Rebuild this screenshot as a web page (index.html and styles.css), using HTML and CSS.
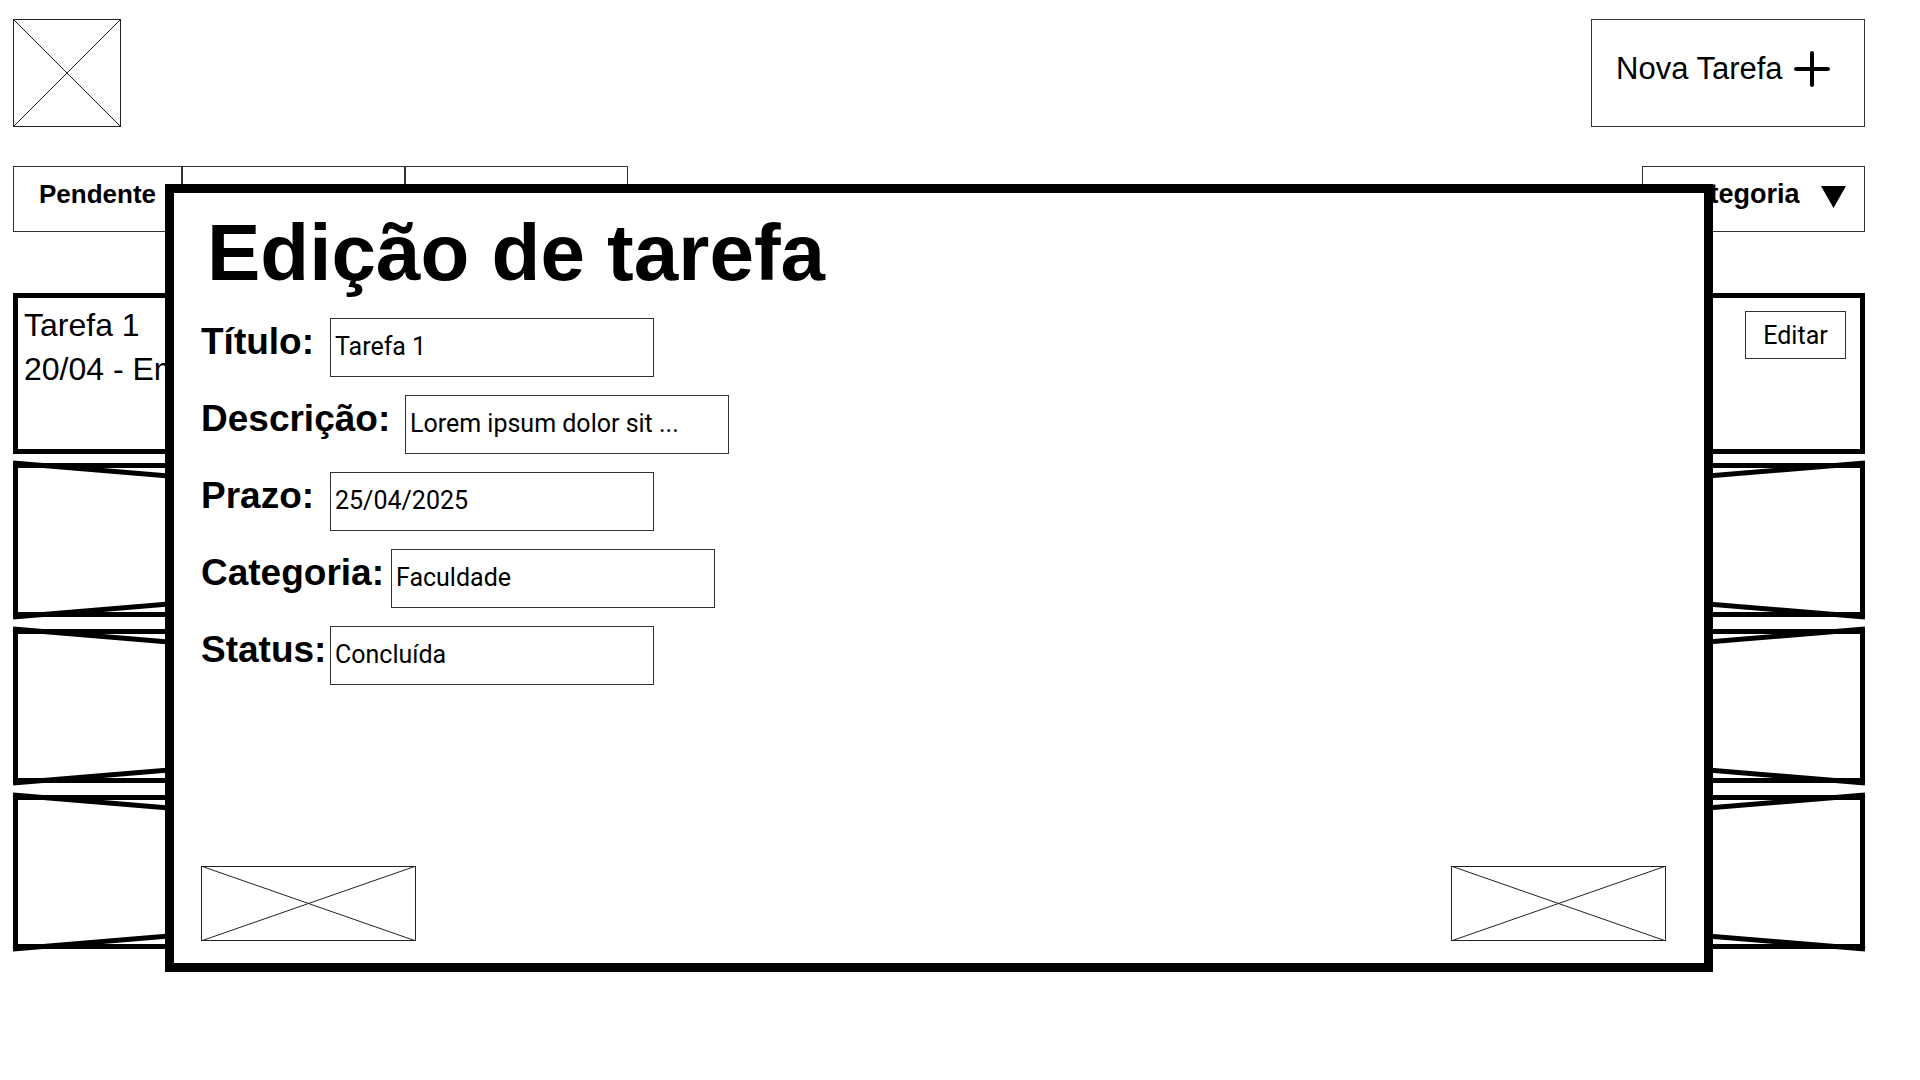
FILE: index.html
```html
<!DOCTYPE html>
<html lang="pt-BR">
<head>
<meta charset="utf-8">
<meta name="viewport" content="width=device-width, initial-scale=1">
<title>Edição de tarefa</title>
<link rel="stylesheet" href="styles.css">
</head>
<body>
<div class="page">
  <header class="topbar">
    <svg class="logo crossed" role="img" aria-label="Logo">
      <rect width="100%" height="100%"/>
      <line x1="0" y1="0" x2="100%" y2="100%"/>
      <line x1="0" y1="100%" x2="100%" y2="0"/>
    </svg>
    <button class="new-task" type="button">
      <span>Nova Tarefa</span>
      <svg class="plus" viewBox="0 0 36 36" aria-hidden="true"><path d="M18 2v32M2 18h32"/></svg>
    </button>
  </header>

  <nav class="filters">
    <div class="tabs">
      <button class="tab tab-first" type="button">Pendente</button>
      <button class="tab" type="button">Em progresso</button>
      <button class="tab" type="button">Concluída</button>
    </div>
    <button class="category" type="button">
      <span>Categoria</span>
      <svg class="arrow" viewBox="0 0 25 26" aria-hidden="true"><path d="M0 4h25L12.500 26z"/></svg>
    </button>
  </nav>

  <main class="tasks">
    <article class="task">
      <p class="task-text">Tarefa 1<br>20/04 - Em</p>
      <button class="edit" type="button">Editar</button>
    </article>
    <div class="slots">
      <div class="slot"><svg class="slot-cross" aria-hidden="true"><line x1="0" y1="0" x2="100%" y2="100%"/><line x1="0" y1="100%" x2="100%" y2="0"/></svg></div>
      <div class="slot"><svg class="slot-cross" aria-hidden="true"><line x1="0" y1="0" x2="100%" y2="100%"/><line x1="0" y1="100%" x2="100%" y2="0"/></svg></div>
      <div class="slot"><svg class="slot-cross" aria-hidden="true"><line x1="0" y1="0" x2="100%" y2="100%"/><line x1="0" y1="100%" x2="100%" y2="0"/></svg></div>
    </div>
  </main>

  <form class="modal" role="dialog" aria-labelledby="modal-title">
    <h1 class="modal-title" id="modal-title">Edição de tarefa</h1>
    <div class="fields">
      <div class="field">
        <label class="label" for="titulo">Título:</label>
        <input class="input" id="titulo" type="text" value="Tarefa 1">
      </div>
      <div class="field">
        <label class="label label-long" for="descricao">Descrição:</label>
        <input class="input" id="descricao" type="text" value="Lorem ipsum dolor sit ...">
      </div>
      <div class="field">
        <label class="label" for="prazo">Prazo:</label>
        <input class="input" id="prazo" type="text" value="25/04/2025">
      </div>
      <div class="field">
        <label class="label label-medium" for="categoria">Categoria:</label>
        <input class="input" id="categoria" type="text" value="Faculdade">
      </div>
      <div class="field">
        <label class="label" for="status">Status:</label>
        <input class="input" id="status" type="text" value="Concluída">
      </div>
    </div>
    <div class="actions">
      <button class="action" type="button" aria-label="Cancelar">
        <svg class="crossed" aria-hidden="true">
          <rect width="100%" height="100%"/>
          <line x1="0" y1="0" x2="100%" y2="100%"/>
          <line x1="0" y1="100%" x2="100%" y2="0"/>
        </svg>
      </button>
      <button class="action" type="button" aria-label="Salvar">
        <svg class="crossed" aria-hidden="true">
          <rect width="100%" height="100%"/>
          <line x1="0" y1="0" x2="100%" y2="100%"/>
          <line x1="0" y1="100%" x2="100%" y2="0"/>
        </svg>
      </button>
    </div>
  </form>
</div>
</body>
</html>
```
FILE: styles.css
```css
* {
  box-sizing: border-box;
}

body {
  margin: 0;
  background: #fff;
  color: #000;
  font-family: "Liberation Sans", Arial, sans-serif;
}

button,
input {
  margin: 0;
  padding: 0;
  border: 1px solid #333;
  border-radius: 0;
  background: #fff;
  color: inherit;
  font: inherit;
}

.page {
  position: relative;
  padding: 19px 55px 40px 13px;
}

/* Placeholder boxes with both diagonals */
.crossed {
  display: block;
  fill: none;
  stroke: #222;
  stroke-width: 1;
}

.crossed rect {
  stroke-width: 2;
}

.topbar {
  display: flex;
  justify-content: space-between;
}

.logo {
  width: 108px;
  height: 108px;
}

.new-task {
  display: flex;
  align-items: center;
  justify-content: space-between;
  width: 274px;
  height: 108px;
  padding: 0 34px 8px 24px;
  font-size: 31px;
}

.plus {
  width: 36px;
  height: 36px;
  fill: none;
  stroke: #000;
  stroke-width: 4;
  stroke-linecap: round;
}

.filters {
  display: flex;
  justify-content: space-between;
  margin-top: 39px;
  font-weight: bold;
}

.tabs {
  display: flex;
  font-size: 26px;
}

.tab {
  width: 223px;
  height: 66px;
  padding-bottom: 9px;
}

.tab-first {
  width: 169px;
}

.category {
  display: flex;
  align-items: center;
  justify-content: space-between;
  width: 223px;
  height: 66px;
  padding: 0 18px 9px 32px;
  font-size: 27px;
}

.arrow {
  width: 25px;
  height: 26px;
}

.tasks {
  margin-top: 61px;
}

.task {
  display: flex;
  align-items: flex-start;
  justify-content: space-between;
  min-height: 161px;
  padding: 5px 14px 5px 6px;
  border: 5px solid #000;
}

.task-text {
  margin: 0;
  font-size: 32px;
  line-height: 44px;
}

.edit {
  width: 101px;
  height: 48px;
  margin-top: 8px;
  font-family: Roboto, sans-serif;
  font-size: 25px;
}

.slots {
  display: grid;
  gap: 12px;
  margin-top: 9px;
}

.slot {
  display: grid;
  height: 154px;
  background: linear-gradient(#000, #000) left / 5px 100% no-repeat,
    linear-gradient(#000, #000) right / 5px 100% no-repeat,
    linear-gradient(#000, #000) top / 100% 5px no-repeat,
    linear-gradient(#000, #000) bottom / 100% 5px no-repeat;
}

.slot-cross {
  width: 100%;
  height: 100%;
  overflow: visible;
  stroke: #000;
  stroke-width: 5;
}

/* Dialog laid over the task list */
.modal {
  position: absolute;
  top: 184px;
  left: 165px;
  right: 207px;
  display: flex;
  flex-direction: column;
  min-height: 788px;
  padding: 14px 38px 22px 27px;
  border: 9px solid #000;
  background: #fff;
}

.modal-title {
  margin: 0;
  padding-left: 6px;
  font-size: 80px;
  line-height: 92px;
}

.fields {
  display: grid;
  gap: 18px;
  margin-top: 19px;
}

.field {
  display: flex;
  align-items: center;
}

.label {
  width: 129px;
  padding-bottom: 12px;
  font-size: 37px;
  font-weight: bold;
  line-height: 44px;
  white-space: nowrap;
}

.label-medium {
  width: 190px;
}

.label-long {
  width: 204px;
}

.input {
  width: 324px;
  height: 59px;
  padding: 0 4px 3px;
  font-family: Roboto, sans-serif;
  font-size: 25px;
}

.actions {
  display: flex;
  justify-content: space-between;
  margin-top: auto;
}

.action {
  width: 215px;
  height: 75px;
  border: 0;
}

.action .crossed {
  width: 100%;
  height: 100%;
}
```
